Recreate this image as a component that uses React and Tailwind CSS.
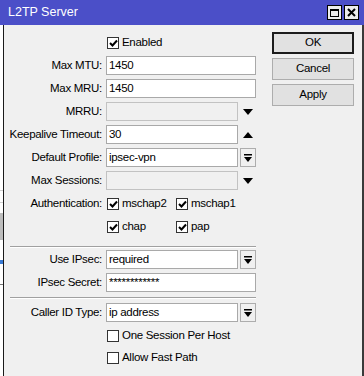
import React from "react";

function Check({ checked }) {
  return (
    <span className="w-[12px] h-[12px] border border-[#333] bg-white flex items-center justify-center shrink-0">
      {checked && (
        <svg width="9" height="8" viewBox="0 0 9 8">
          <path d="M1 4 L3.5 6.5 L8 1.5" fill="none" stroke="#000" strokeWidth="2" />
        </svg>
      )}
    </span>
  );
}

function CheckItem({ checked, label, className = "" }) {
  return (
    <span className={"flex items-center gap-[3px] whitespace-nowrap " + className}>
      <Check checked={checked} />
      <span>{label}</span>
    </span>
  );
}

function Triangle({ up }) {
  return (
    <svg width="10" height="6" viewBox="0 0 10 6">
      <path d={up ? "M0 6 L5 0 L10 6 Z" : "M0 0 L10 0 L5 6 Z"} fill="#000" />
    </svg>
  );
}

function DropButton() {
  return (
    <span className="w-[16px] h-[19px] border border-[#adadad] bg-[#f0f0f0] flex items-center justify-center shrink-0">
      <svg width="8" height="8" viewBox="0 0 8 8">
        <rect x="0" y="0" width="8" height="1.5" fill="#000" />
        <path d="M0 3 L8 3 L4 8 Z" fill="#000" />
      </svg>
    </span>
  );
}

function Field({ value = "", disabled, width = "w-[150px]" }) {
  return (
    <span
      className={
        "h-[19px] border flex items-center px-[2px] whitespace-nowrap " +
        width +
        (disabled ? " bg-[#f0f0f0] border-[#c2c2c2]" : " bg-white border-[#a9a9a9]")
      }
    >
      {value}
    </span>
  );
}

function Row({ label, children, className = "" }) {
  return (
    <div className={"h-[23px] flex items-center " + className}>
      <span className="w-[99px] text-right pr-[1px] shrink-0 whitespace-nowrap">{label}</span>
      <span className="ml-[3px] flex items-center gap-[2px]">{children}</span>
    </div>
  );
}

function Separator({ className = "" }) {
  return (
    <div className={"ml-[6px] w-[246px] " + className}>
      <div className="h-px bg-[#a0a0a0]" />
      <div className="h-px bg-white" />
    </div>
  );
}

function Button({ children, primary }) {
  return (
    <div
      className={
        "h-[22px] w-[82px] bg-[#e1e1e1] flex items-center justify-center " +
        (primary ? "border-2 border-[#1c1c1c]" : "border border-[#adadad]")
      }
    >
      {children}
    </div>
  );
}

export default function App() {
  return (
    <div className="w-[364px] h-[376px] overflow-hidden bg-white text-[11.5px] tracking-[-0.3px] text-black font-['Liberation_Sans',Arial,sans-serif] flex flex-col">
      <div className="h-[25px] bg-[#4b4fc8] text-white flex items-center justify-between pl-[8px] pr-[5px] shrink-0">
        <span className="text-[12.5px] tracking-normal">L2TP Server</span>
        <div className="flex gap-[2px]">
          <span className="w-[15px] h-[15px] bg-[#ececec] border border-black flex items-center justify-center">
            <span className="w-[9px] h-[8px] border border-black border-t-2" />
          </span>
          <span className="w-[15px] h-[15px] bg-[#ececec] border border-black flex items-center justify-center">
            <svg width="9" height="9" viewBox="0 0 9 9">
              <path d="M1 1 L8 8 M8 1 L1 8" stroke="#000" strokeWidth="2" />
            </svg>
          </span>
        </div>
      </div>

      <div className="flex flex-1">
        <div className="w-[3px] flex flex-col shrink-0">
          <div className="h-[165px] bg-white" />
          <div className="h-px bg-[#d0d0d0]" />
          <div className="h-[11px] bg-white" />
          <div className="h-px bg-[#d0d0d0]" />
          <div className="h-[10px] bg-white" />
          <div className="h-[27px] bg-[#bdbdbd]" />
          <div className="h-[20px] bg-white" />
          <div className="h-[4px] bg-[#3a7bd5]" />
          <div className="h-[20px] bg-white" />
          <div className="h-px bg-[#777]" />
          <div className="flex-1 bg-white" />
        </div>

        <div className="flex-1 flex bg-[#f0f0f0] border-l border-[#1a1a1a] border-r-2 border-r-[#3a3a3a]">
          <div className="w-[266px] pt-[6px] flex flex-col shrink-0">
            <div className="h-[23px] flex items-center pl-[103px]">
              <CheckItem checked label="Enabled" />
            </div>
            <Row label="Max MTU:">
              <Field value="1450" />
            </Row>
            <Row label="Max MRU:">
              <Field value="1450" />
            </Row>
            <Row label="MRRU:">
              <Field disabled width="w-[132px]" />
              <span className="w-[16px] flex justify-center">
                <Triangle />
              </span>
            </Row>
            <Row label="Keepalive Timeout:">
              <Field value="30" width="w-[132px]" />
              <span className="w-[16px] flex justify-center">
                <Triangle up />
              </span>
            </Row>
            <Row label="Default Profile:">
              <Field value="ipsec-vpn" width="w-[132px]" />
              <DropButton />
            </Row>
            <Row label="Max Sessions:">
              <Field disabled width="w-[132px]" />
              <span className="w-[16px] flex justify-center">
                <Triangle />
              </span>
            </Row>
            <Row label="Authentication:">
              <span className="flex items-center ml-[1px]">
                <CheckItem checked label="mschap2" className="w-[69px]" />
                <CheckItem checked label="mschap1" />
              </span>
            </Row>
            <Row label="" className="h-[24px]">
              <span className="flex items-center ml-[1px]">
                <CheckItem checked label="chap" className="w-[69px]" />
                <CheckItem checked label="pap" />
              </span>
            </Row>
            <Separator className="mt-[7px]" />
            <Row label="Use IPsec:">
              <Field value="required" width="w-[132px]" />
              <DropButton />
            </Row>
            <Row label="IPsec Secret:">
              <Field value="************" />
            </Row>
            <Separator className="mt-[3px]" />
            <Row label="Caller ID Type:" className="mt-[2px]">
              <Field value="ip address" width="w-[132px]" />
              <DropButton />
            </Row>
            <div className="h-[23px] flex items-center pl-[103px]">
              <CheckItem label="One Session Per Host" />
            </div>
            <div className="h-[22px] flex items-center pl-[103px]">
              <CheckItem label="Allow Fast Path" />
            </div>
          </div>

          <div className="pt-[7px] pl-[2px] flex flex-col gap-[4px]">
            <Button primary>OK</Button>
            <Button>Cancel</Button>
            <Button>Apply</Button>
          </div>
        </div>
      </div>
    </div>
  );
}
